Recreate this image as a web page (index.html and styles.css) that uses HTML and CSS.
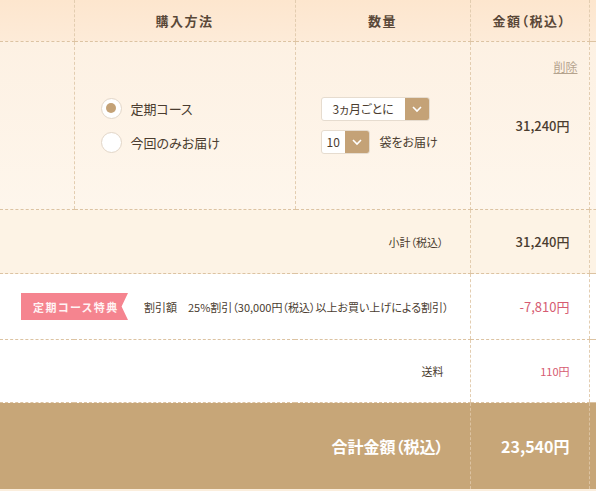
FILE: index.html
```html
<!DOCTYPE html>
<html lang="ja">
<head>
<meta charset="utf-8">
<link rel="stylesheet" href="styles.css">
</head>
<body>
<table class="cart">
  <colgroup>
    <col class="c1"><col class="c2"><col class="c3"><col class="c4"><col class="c5">
  </colgroup>
  <thead>
    <tr class="head">
      <th></th>
      <th>購入方法</th>
      <th>数量</th>
      <th>金額（税込）</th>
      <th class="edge"></th>
    </tr>
  </thead>
  <tbody>
    <tr class="item">
      <td class="nodash"></td>
      <td>
        <div class="radios">
          <label class="radio"><span class="dot on"></span>定期コース</label>
          <label class="radio"><span class="dot"></span>今回のみお届け</label>
        </div>
      </td>
      <td>
        <div class="qty">
          <div class="sel wide"><span class="val">3ヵ月ごとに</span><span class="btn"><svg width="12" height="8" viewBox="0 0 12 8"><path d="M2 2 L6 6 L10 2" fill="none" stroke="#fff" stroke-width="1.6"/></svg></span></div>
          <div class="line">
            <div class="sel"><span class="val">10</span><span class="btn"><svg width="12" height="8" viewBox="0 0 12 8"><path d="M2 2 L6 6 L10 2" fill="none" stroke="#fff" stroke-width="1.6"/></svg></span></div>
            <span class="unit">袋をお届け</span>
          </div>
        </div>
      </td>
      <td class="pricecell">
        <a class="del">削除</a>
        <span class="price">31,240円</span>
      </td>
      <td class="edge"></td>
    </tr>
    <tr class="sub">
      <td colspan="3" class="label">小計（税込）</td>
      <td class="amount bold">31,240円</td>
      <td class="edge"></td>
    </tr>
    <tr class="disc white">
      <td colspan="3">
        <div class="discline">
          <span class="badge">定期コース特典</span>
          <span class="desc">割引額　25%割引（30,000円（税込）以上お買い上げによる割引）</span>
        </div>
      </td>
      <td class="amount pink">-7,810円</td>
      <td class="edge"></td>
    </tr>
    <tr class="ship white">
      <td colspan="3" class="label">送料</td>
      <td class="amount pink small">110円</td>
      <td class="edge"></td>
    </tr>
    <tr class="total">
      <td colspan="3" class="label">合計金額（税込）</td>
      <td class="amount">23,540円</td>
      <td class="edge"></td>
    </tr>
  </tbody>
</table>
</body>
</html>
```

FILE: styles.css
```css
* { box-sizing: border-box; }
html, body { margin: 0; padding: 0; }
body {
  width: 596px;
  height: 491px;
  overflow: hidden;
  background: #fbeedd;
  font-family: "Noto Sans CJK JP", "Noto Sans", sans-serif;
  font-feature-settings: "palt";
  color: #4a3c2f;
}
.cart {
  width: 596px;
  border-collapse: collapse;
  table-layout: fixed;
}
.c1 { width: 74px; }
.c2 { width: 221px; }
.c3 { width: 175px; }
.c4 { width: 119px; }
.c5 { width: 7px; }

.cart th, .cart td {
  padding: 0;
  border-left: 1px dashed #e3cdb0;
  border-bottom: 1px dashed #dcc3a2;
}
.cart tr > *:first-child { border-left: none; }

.head { height: 41px; background: linear-gradient(#fde6ce, #fdebd8); }
.head th {
  font-size: 13px;
  font-weight: bold;
  color: #5a4838;
  letter-spacing: 1.5px;
  text-align: center;
  vertical-align: middle;
}

.item { height: 168px; background: linear-gradient(#fdf1e3, #fef6ec); }
.item td { vertical-align: middle; }

.radios {
  display: flex;
  flex-direction: column;
  gap: 13px;
  padding-left: 26px;
}
.radio {
  display: flex;
  align-items: center;
  gap: 9px;
  font-size: 13px;
  color: #4a3c2f;
}
.dot {
  width: 21px;
  height: 21px;
  border-radius: 50%;
  background: #fff;
  border: 1px solid #e2d6c8;
  display: flex;
  align-items: center;
  justify-content: center;
}
.dot.on::after {
  content: "";
  width: 10px;
  height: 10px;
  border-radius: 50%;
  background: #c4a277;
}

.qty {
  display: flex;
  flex-direction: column;
  gap: 9px;
  padding-left: 25px;
}
.line { display: flex; align-items: center; gap: 10px; }
.sel {
  display: flex;
  height: 24px;
  width: 49px;
  background: #fff;
  border: 1px solid #e6dccf;
  border-radius: 3px;
  overflow: hidden;
}
.sel.wide { width: 109px; }
.sel .val {
  flex: 1;
  font-size: 12px;
  line-height: 22px;
  padding-left: 5px;
  color: #4a3c2f;
}
.sel.wide .val { padding-left: 11px; }
.sel .btn {
  width: 24px;
  background: #c4a277;
  display: flex;
  align-items: center;
  justify-content: center;
}
.unit { font-size: 12px; color: #4a3c2f; }

.pricecell {
  display: grid;
  height: 168px;
  grid-template-rows: 1fr auto 1fr;
  border-left: 1px dashed #e3cdb0;
}
.del {
  grid-row: 1;
  justify-self: end;
  align-self: start;
  margin-top: 16px;
  margin-right: 11px;
  font-size: 12px;
  color: #b5a38e;
  text-decoration: underline;
}
.price {
  grid-row: 2;
  justify-self: end;
  padding-right: 19px;
  font-size: 13px;
  font-weight: 500;
  color: #4a3c2f;
}

.sub { height: 64px; background: #fdf3e5; }
.white { background: #fff; }
.disc { height: 66px; }
.ship { height: 63px; }

.label {
  text-align: right;
  padding-right: 26px !important;
  font-size: 11px;
  vertical-align: middle;
}
.amount {
  text-align: right;
  padding-right: 19px !important;
  font-size: 13px;
  vertical-align: middle;
}
.bold { font-weight: 500; }
.pink { color: #d65b72; }
.small { font-size: 11px; }

.discline {
  display: flex;
  align-items: center;
  gap: 16px;
  padding-left: 21px;
}
.badge {
  width: 107px;
  height: 27px;
  background: #f5848f;
  color: #fff3f4;
  font-size: 11px;
  font-weight: bold;
  letter-spacing: 1.5px;
  display: flex;
  align-items: center;
  padding-left: 12px;
  clip-path: polygon(0 0, 100% 0, 94% 50%, 100% 100%, 0 100%);
}
.desc { font-size: 11px; color: #4a3c2f; }

.total { height: 86px; background: #c7a678; }
.total td { border-left-color: #dcc3a2; border-bottom: none; color: #fff; font-weight: bold; font-size: 16px; }
.total .label { font-size: 16px; }
.edge { border-left: 1px dashed #e3cdb0; }
```
